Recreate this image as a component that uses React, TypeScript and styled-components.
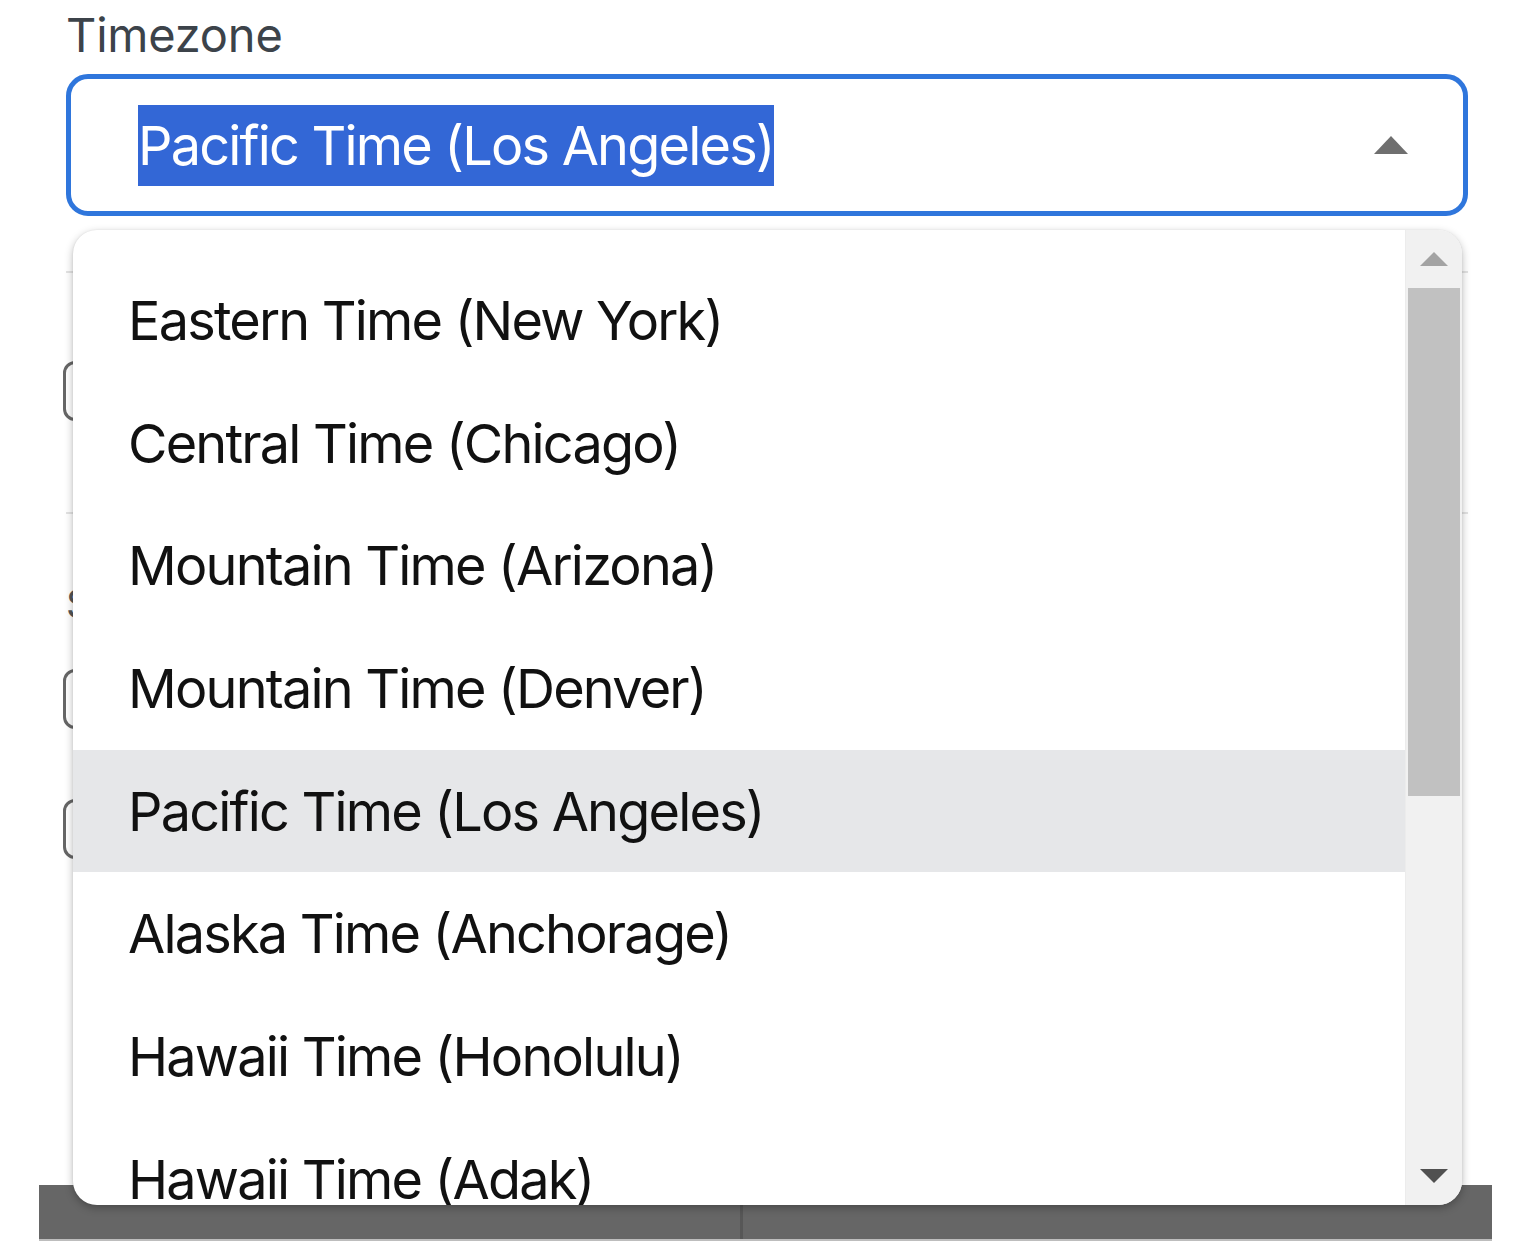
import React from "react";
import styled, { createGlobalStyle } from "styled-components";

const Global = createGlobalStyle`
  html, body { margin: 0; padding: 0; background: #ffffff; }
  body { font-family: Inter, "Noto Sans", "Liberation Sans", sans-serif; }
  * { box-sizing: border-box; }
`;

const Page = styled.div`
  position: relative;
  width: 1522px;
  height: 1245px;
  overflow: hidden;
  background: #ffffff;
`;

const Form = styled.div`
  display: flex;
  flex-direction: column;
  padding: 0 54px 0 66px;
`;

const Label = styled.div`
  font-size: 47px;
  line-height: 70px;
  color: #3c434a;
  font-weight: 400;
  height: 74px;
  letter-spacing: -0.2px;
`;

const SelectBox = styled.div`
  height: 142px;
  border: 5px solid #2f76dc;
  border-radius: 22px;
  display: flex;
  align-items: center;
  justify-content: space-between;
  padding: 0 55px 0 67px;
`;

const SelectedText = styled.span`
  background: #3367d6;
  color: #ffffff;
  font-size: 54px;
  line-height: 81px;
  letter-spacing: -1.8px;
`;

const Caret = styled.svg`
  width: 34px;
  height: 18px;
  display: block;
`;

const Divider = styled.div<{ $top: number }>`
  height: 2px;
  background: #e3e3e3;
  margin-top: ${(p) => p.$top}px;
`;

const Input = styled.div<{ $top: number }>`
  width: 620px;
  height: 60px;
  margin-top: ${(p) => p.$top}px;
  margin-left: -3px;
  border: 3px solid #666666;
  border-radius: 12px;
`;

const SmallLabel = styled.div`
  margin-top: 70px;
  font-size: 40px;
  line-height: 40px;
  color: #555;
`;

const Footer = styled.div`
  position: absolute;
  left: 39px;
  top: 1185px;
  width: 1453px;
  height: 56px;
  display: grid;
  grid-template-columns: 701px 3px 1fr;
  background: #666666;
  border-bottom: 2px solid #bdbdbd;
`;

const FooterDivider = styled.div`
  background: #575757;
`;

const Dropdown = styled.div`
  position: absolute;
  left: 73px;
  top: 230px;
  width: 1389px;
  height: 975px;
  background: #ffffff;
  border-radius: 24px;
  overflow: hidden;
  display: flex;
  box-shadow: 0 3px 8px rgba(0, 0, 0, 0.28), 0 0 2px rgba(0, 0, 0, 0.08);
`;

const List = styled.div`
  flex: 1;
  padding-top: 29px;
  display: flex;
  flex-direction: column;
`;

const Option = styled.div<{ $active?: boolean }>`
  flex: 0 0 auto;
  height: 122.7px;
  display: flex;
  align-items: center;
  padding-left: 55px;
  font-size: 54px;
  color: #111111;
  letter-spacing: -1.8px;
  white-space: nowrap;
  background: ${(p) => (p.$active ? "#e6e7e9" : "transparent")};
`;

const Scrollbar = styled.div`
  width: 57px;
  background: #f1f1f1;
  display: flex;
  flex-direction: column;
  align-items: center;
  border-left: 1px solid #ececec;
`;

const ArrowButton = styled.div`
  height: 58px;
  width: 100%;
  display: flex;
  align-items: center;
  justify-content: center;
  flex: 0 0 auto;
`;

const Track = styled.div`
  flex: 1;
  width: 100%;
  padding: 0 2px 0 2px;
`;

const Thumb = styled.div`
  height: 508px;
  background: #c1c1c1;
`;

const options = [
  "Eastern Time (New York)",
  "Central Time (Chicago)",
  "Mountain Time (Arizona)",
  "Mountain Time (Denver)",
  "Pacific Time (Los Angeles)",
  "Alaska Time (Anchorage)",
  "Hawaii Time (Honolulu)",
  "Hawaii Time (Adak)",
];

export default function App() {
  return (
    <Page>
      <Global />
      <Form>
        <Label>Timezone</Label>
        <SelectBox>
          <SelectedText>Pacific Time (Los Angeles)</SelectedText>
          <Caret viewBox="0 0 34 18">
            <polygon points="0,18 17,0 34,18" fill="#6f6f6f" />
          </Caret>
        </SelectBox>
        <Divider $top={55} />
        <Input $top={88} />
        <Divider $top={91} />
        <SmallLabel>S</SmallLabel>
        <Input $top={45} />
        <Input $top={70} />
      </Form>
      <Footer>
        <div />
        <FooterDivider />
        <div />
      </Footer>
      <Dropdown>
        <List>
          {options.map((o) => (
            <Option key={o} $active={o === "Pacific Time (Los Angeles)"}>
              {o}
            </Option>
          ))}
        </List>
        <Scrollbar>
          <ArrowButton>
            <svg width="28" height="14" viewBox="0 0 28 14">
              <polygon points="0,14 14,0 28,14" fill="#a3a3a3" />
            </svg>
          </ArrowButton>
          <Track>
            <Thumb />
          </Track>
          <ArrowButton>
            <svg width="28" height="14" viewBox="0 0 28 14">
              <polygon points="0,0 28,0 14,14" fill="#505050" />
            </svg>
          </ArrowButton>
        </Scrollbar>
      </Dropdown>
    </Page>
  );
}
